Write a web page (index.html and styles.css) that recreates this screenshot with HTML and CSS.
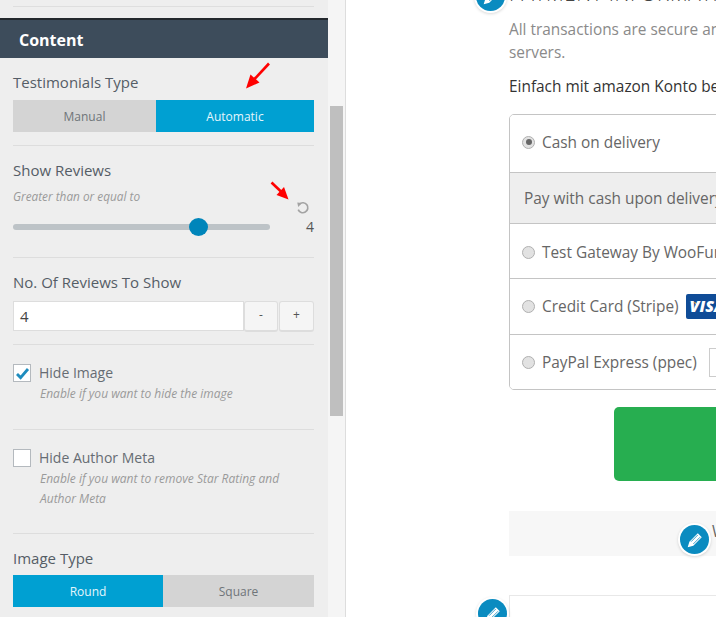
FILE: index.html
```html
<!DOCTYPE html>
<html lang="en">
<head>
<meta charset="utf-8">
<title>Content settings</title>
<link rel="stylesheet" href="styles.css">
</head>
<body>
<div class="app">
  <aside class="sidebar">
    <div class="panel">
      <div class="top-rule"></div>
      <h2 class="panel-head">Content</h2>
      <div class="panel-body">
        <section class="field f-type">
          <div class="label">Testimonials Type</div>
          <div class="toggle">
            <div class="opt t-manual">Manual</div>
            <div class="opt active t-auto">Automatic</div>
          </div>
        </section>
        <section class="field f-reviews">
          <div class="label">Show Reviews</div>
          <div class="hint hint-reviews">Greater than or equal to</div>
          <div class="slider-row">
            <div class="track"><span class="thumb"></span></div>
            <div class="slider-val">
              <svg class="reset" width="14" height="14" viewBox="0 0 14 14"><path d="M3.4 3.1A5 5 0 1 1 2.2 8.6" fill="none" stroke="#a3a3a3" stroke-width="1.7"/><path d="M1.3 1.6 L6 1.9 L2.2 6 Z" fill="#a3a3a3"/></svg>
              <span class="val">4</span>
            </div>
          </div>
        </section>
        <section class="field f-num">
          <div class="label">No. Of Reviews To Show</div>
          <div class="stepper">
            <div class="num-input">4</div>
            <div class="step">-</div>
            <div class="step">+</div>
          </div>
        </section>
        <section class="field f-check f-hide-image">
          <div class="check-row">
            <span class="box"><svg width="15" height="13" viewBox="0 0 15 13"><path d="M2 7 L5.6 10.6 L13 2" fill="none" stroke="#1e8cbe" stroke-width="2.8"/></svg></span>
            <span class="check-label">Hide Image</span>
          </div>
          <div class="hint check-hint">Enable if you want to hide the image</div>
        </section>
        <section class="field f-check f-hide-meta">
          <div class="check-row">
            <span class="box"></span>
            <span class="check-label">Hide Author Meta</span>
          </div>
          <div class="hint check-hint">Enable if you want to remove Star Rating and Author Meta</div>
        </section>
        <section class="field f-image">
          <div class="label">Image Type</div>
          <div class="toggle">
            <div class="opt active t-round">Round</div>
            <div class="opt t-square">Square</div>
          </div>
        </section>
      </div>
    </div>
    <svg class="arrow arrow-a" width="26" height="28" viewBox="0 0 26 28"><path d="M24 1.5 L9.5 17" stroke="#f00" stroke-width="2.6"/><path d="M1 26.5 L5.5 12.5 L14.5 20.5 Z" fill="#f00"/></svg>
    <svg class="arrow arrow-b" width="20" height="20" viewBox="0 0 20 20"><path d="M1.500 1.500 L12 11.500" stroke="#f00" stroke-width="2.600"/><path d="M18.500 18.500 L6.500 14 L14 6 Z" fill="#f00"/></svg>
  </aside>
  <div class="scrollbar"><div class="scroll-thumb"></div></div>
  <main class="page">
    <div class="pay-head">
      <span class="edit edit-head"><svg width="18" height="18" viewBox="0 0 16 16"><path class="pencil" d="M1.500 14.500 L3 9.500 L10.500 2 L14 5.500 L6.500 13 Z"/><path class="pencil-line" d="M4.500 9.500 L10.500 3.500 M6.500 11.500 L12.500 5.500"/></svg></span>
      <h3 class="pay-title">PAYMENT INFORMATION</h3>
    </div>
    <p class="muted">All transactions are secure and encrypted by our<br>servers.</p>
    <p class="amazon">Einfach mit amazon Konto bezahlen</p>
    <div class="methods">
      <div class="method m-cash"><span class="radio on"></span>Cash on delivery</div>
      <div class="method-note">Pay with cash upon delivery.</div>
      <div class="method m-test"><span class="radio"></span>Test Gateway By WooFunnels</div>
      <div class="method m-card"><span class="radio"></span>Credit Card (Stripe)<span class="visa"><svg class="visa-flick" width="9" height="7" viewBox="0 0 9 7"><path d="M0 0.500 C4 0 7 2 9 7 L7 1.500 Z" fill="#f7a823"/></svg><span class="visa-text">VISA</span></span></div>
      <div class="method m-paypal"><span class="radio"></span>PayPal Express (ppec)<span class="pp-logo"></span></div>
    </div>
    <div class="buy"></div>
    <div class="secure">
      <span class="edit edit-secure"><svg width="18" height="18" viewBox="0 0 16 16"><path class="pencil" d="M1.500 14.500 L3 9.500 L10.500 2 L14 5.500 L6.500 13 Z"/><path class="pencil-line" d="M4.500 9.500 L10.500 3.500 M6.500 11.500 L12.500 5.500"/></svg></span>
      <span class="secure-text">We</span>
    </div>
    <div class="next">
      <span class="edit edit-next"><svg width="18" height="18" viewBox="0 0 16 16"><path class="pencil" d="M1.500 14.500 L3 9.500 L10.500 2 L14 5.500 L6.500 13 Z"/><path class="pencil-line" d="M4.500 9.500 L10.500 3.500 M6.500 11.500 L12.500 5.500"/></svg></span>
    </div>
  </main>
</div>
</body>
</html>
```

FILE: styles.css
```css
* { box-sizing: border-box; }
html, body { margin: 0; height: 100%; overflow: hidden; background: #fff; }
body { font-family: "Open Sans", "Noto Sans", sans-serif; color: #555d66; }
.app { display: flex; width: 716px; height: 617px; overflow: hidden; }

.sidebar { position: relative; flex: 0 0 328px; height: 617px; background: #eee; overflow: hidden; }
.top-rule { height: 1px; margin: 6px 14px 11px 13px; background: #dedede; }
.panel-head { margin: 0; height: 40px; padding-left: 19px; background: #3d4c5b; border-top: 2px solid #23282d;
  color: #fff; font-size: 16px; font-weight: 700; line-height: 40px; }
.panel-body { padding: 0 14px 0 13px; }
.field { border-bottom: 1px solid #ddd; }
.label { font-size: 15px; line-height: 18px; color: #555d66; }
.f-type { height: 88px; padding-top: 15px; }
.f-reviews { height: 112px; padding-top: 15px; }
.f-num { height: 87px; padding-top: 15px; }
.f-check.f-hide-image { height: 85px; padding-top: 19px; }
.f-check.f-hide-meta { height: 104px; padding-top: 19px; }
.f-image { padding-top: 15px; border-bottom: 0; }

.toggle { display: flex; height: 32px; margin-top: 9px; font-size: 12px; }
.f-image .toggle { margin-top: 8px; }
.opt { display: flex; align-items: center; justify-content: center; background: #d4d4d4; color: #6f7479; }
.opt.active { background: #00a0d2; color: #e4f6fc; }
.t-manual { flex: 0 0 143px; }
.t-auto { flex: 0 0 158px; }
.t-round { flex: 0 0 150px; }
.t-square { flex: 0 0 151px; }

.hint { font-size: 11.800px; font-style: italic; color: #9a9a9a; line-height: 20px; }
.hint-reviews { margin-top: 7px; }
.slider-row { display: flex; justify-content: space-between; margin-top: -5px; }
.track { position: relative; width: 257px; height: 6px; margin-top: 23px; border-radius: 3px; background: #bdc3c7; }
.thumb { position: absolute; left: 176px; top: -6px; width: 19px; height: 18px; border-radius: 50%; background: #0085ba; }
.slider-val { display: flex; flex-direction: column; align-items: flex-end; }
.reset { margin-right: 4px; }
.val { font-size: 14px; line-height: 18px; margin-top: 3px; color: #555; }

.stepper { display: flex; height: 31px; margin-top: 10px; }
.num-input { width: 231px; height: 30px; padding-left: 6px; background: #fff; border: 1px solid #ddd;
  font-size: 15px; line-height: 28px; color: #444; }
.step { width: 34px; height: 31px; margin-right: 1px; background: #f5f5f5; border: 1px solid #ddd; border-bottom-width: 2px;
  border-radius: 3px; text-align: center; font-size: 12px; line-height: 26px; color: #555; }
.step:last-child { width: 35px; margin: 0; }

.check-row { display: flex; align-items: center; height: 18px; }
.box { display: flex; align-items: center; justify-content: center; width: 18px; height: 18px; margin-right: 8px;
  background: #fff; border: 1px solid #b4b9be; }
.check-label { font-size: 14px; line-height: 18px; color: #666c73; }
.check-hint { margin: 2px 0 0 27px; width: 265px; font-size: 12px; line-height: 20px; }

.arrow { position: absolute; }
.arrow-a { left: 245px; top: 62px; }
.arrow-b { left: 270px; top: 181px; }

.scrollbar { flex: 0 0 18px; height: 617px; background: #f5f5f5; border-right: 1px solid #ddd; padding: 106px 2px 0; }
.scroll-thumb { width: 13px; height: 310px; background: #bfbfbf; }

.page { position: relative; flex: 0 0 370px; height: 617px; padding-left: 163px; overflow: hidden; background: #fff; }
.pay-head { position: relative; display: flow-root; height: 18px; white-space: nowrap; }
.pay-title { margin: -17px 0 0; font-size: 20.500px; font-weight: 300; line-height: 20px; color: #444; letter-spacing: .6px; }
.edit { position: absolute; display: flex; align-items: center; justify-content: center; width: 29px; height: 29px;
  border-radius: 50%; background: #0a8bc0; box-shadow: 0 0 0 2px #fff, 0 1px 3px 2px rgba(0,0,0,.15); }
.pencil { fill: #fff; }
.pencil-line { fill: none; stroke: #0a8bc0; stroke-width: .7; }
.edit-head { left: -33px; top: -18px; }
.edit-secure { left: 171px; top: 14px; width: 29px; height: 29px; }
.edit-next { left: -32px; top: 3px; }

.muted { margin: 0; height: 46px; font-size: 15.400px; line-height: 23px; color: #8a8a8a; white-space: nowrap; }
.amazon { margin: 11px 0 0; font-size: 15.400px; line-height: 24px; color: #333; white-space: nowrap; }
.methods { width: 300px; margin-top: 15px; border: 1px solid #c4c4c4; border-radius: 5px; overflow: hidden; color: #666; font-size: 15.400px; }
.method { display: flex; align-items: center; padding-left: 12px; white-space: nowrap; background: #fff; }
.m-cash { height: 57px; padding-bottom: 3px; }
.method-note { height: 52px; padding-left: 14px; background: #eee; border-top: 1px solid #c4c4c4; border-bottom: 1px solid #c4c4c4; line-height: 51px; white-space: nowrap; }
.m-test { height: 55px; padding-top: 2px; border-bottom: 1px solid #c4c4c4; }
.m-card { height: 56px; border-bottom: 1px solid #c4c4c4; }
.m-paypal { height: 54px; }
.radio { flex: none; position: relative; width: 13px; height: 13px; margin-right: 7px; border-radius: 50%; border: 1px solid #b0b0b0; background: #e2e2e2; }
.radio.on::after { content: ""; position: absolute; left: 2.500px; top: 2.500px; width: 6px; height: 6px; border-radius: 50%; background: #666; }
.visa { position: relative; display: inline-block; width: 60px; height: 25px; margin-left: 7px; padding-left: 4px; border-radius: 2px; background: #0f4c97; }
.visa-flick { position: absolute; left: 3px; top: 7px; }
.visa-text { position: relative; font-size: 16px; font-weight: 800; font-style: italic; line-height: 25px; color: #fff; }
.pp-logo { display: inline-block; width: 40px; height: 29px; margin-left: 12px; border: 1px solid #ccc; background: #fff; }
.buy { width: 200px; height: 74px; margin: 17px 0 0 105px; border-radius: 5px; background: #27ae50; }
.secure { position: relative; width: 300px; height: 45px; margin-top: 30px; background: #f7f7f7; font-size: 15.400px; color: #666; }
.secure-text { position: absolute; left: 203px; top: 10px; }
.next { position: relative; width: 300px; height: 40px; margin-top: 39px; background: #fff; border: 1px solid #e8e8e8; }
```
